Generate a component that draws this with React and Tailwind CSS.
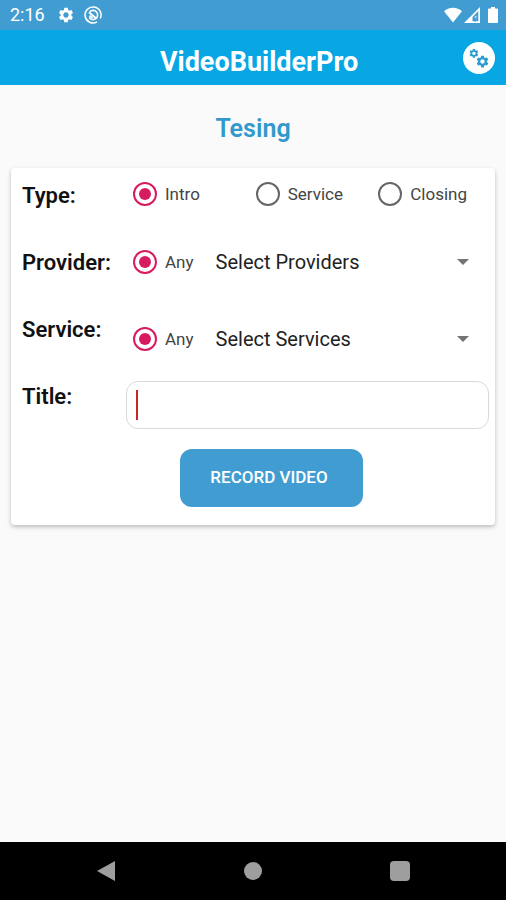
import React, { useState } from "react";

const videoTypes = ["Intro", "Service", "Closing"];

const GEAR_PATH =
  "M19.14 12.94c.04-.3.06-.61.06-.94 0-.32-.02-.64-.07-.94l2.03-1.58c.18-.14.23-.41.12-.61l-1.92-3.32c-.12-.22-.37-.29-.59-.22l-2.39.96c-.5-.38-1.03-.7-1.62-.94l-.36-2.54c-.04-.24-.24-.41-.48-.41h-3.84c-.24 0-.43.17-.47.41l-.36 2.54c-.59.24-1.13.57-1.62.94l-2.39-.96c-.22-.08-.47 0-.59.22L2.74 8.87c-.12.21-.08.47.12.61l2.03 1.58c-.05.3-.09.63-.09.94s.02.64.07.94l-2.03 1.58c-.18.14-.23.41-.12.61l1.92 3.32c.12.22.37.29.59.22l2.39-.96c.5.38 1.03.7 1.62.94l.36 2.54c.05.24.24.41.48.41h3.84c.24 0 .44-.17.47-.41l.36-2.54c.59-.24 1.13-.56 1.62-.94l2.39.96c.22.08.47 0 .59-.22l1.92-3.32c.12-.22.07-.47-.12-.61l-2.01-1.58zM12 15.6c-1.98 0-3.6-1.62-3.6-3.6s1.62-3.6 3.6-3.6 3.6 1.62 3.6 3.6-1.62 3.6-3.6 3.6z";

function StatusBar() {
  return (
    <div className="flex h-[30px] items-center bg-[#419dd1] pl-[10px] pr-2 text-white">
      <span className="text-lg leading-[30px]">2:16</span>
      <svg viewBox="0 0 24 24" className="ml-3 size-[18px]" fill="currentColor">
        <path d={GEAR_PATH} />
      </svg>
      <svg
        viewBox="0 0 18 18"
        className="ml-[9px] size-[18px]"
        fill="none"
        stroke="currentColor"
      >
        <path d="M13 15.900A8 8 0 1 1 16.200 12.500" strokeWidth="1.500" />
        <path d="M5.800 5.700A4.600 4.600 0 1 1 5.200 11.600" strokeWidth="1.600" />
        <path d="M5 6.200 12.300 12.500M5.500 9.800 8.500 12" strokeWidth="1.800" />
      </svg>
      <svg viewBox="0 0 18 16" className="ml-auto h-4 w-[18px]" fill="currentColor">
        <path d="M9 15.500 0 4.200C2.400 2 5.500.8 9 .8s6.600 1.200 9 3.400z" />
      </svg>
      <svg viewBox="0 0 16 16" className="ml-[2px] size-4" fill="currentColor">
        <path
          fillRule="evenodd"
          d="M16 0v16H0zM14.300 4.100 8.500 9.900v4.400h1.800V10.500L12.300 8.500v5.800h2z"
        />
        <path d="M10 10.500h2.500v4H10z" fill="#419dd1" />
      </svg>
      <svg viewBox="0 0 10 16" className="ml-2 h-4 w-[10px]" fill="currentColor">
        <path d="M3 0h4v1.600h2a1 1 0 0 1 1 1V15a1 1 0 0 1-1 1H1a1 1 0 0 1-1-1V2.600a1 1 0 0 1 1-1h2z" />
      </svg>
    </div>
  );
}

function Header() {
  return (
    <header className="flex h-[55px] items-center bg-[#08a7e4] px-[11px] text-white">
      <h1 className="flex-1 pl-11 pt-2 text-center text-[27px] font-bold leading-8">
        VideoBuilderPro
      </h1>
      <button
        type="button"
        aria-label="Settings"
        className="flex size-8 items-center justify-center rounded-full bg-white text-[#2b9bd0]"
      >
        <svg viewBox="0 0 32 32" className="size-8" fill="currentColor">
          <g transform="translate(5.400 5.800) scale(.46)">
            <path d={GEAR_PATH} />
          </g>
          <g transform="translate(12.200 12.200) scale(.61)">
            <path d={GEAR_PATH} />
          </g>
        </svg>
      </button>
    </header>
  );
}

function Radio({ label, ...props }) {
  return (
    <label className="flex items-center gap-2 text-[17px] leading-6 text-[#444444]">
      <input
        type="radio"
        className="flex size-6 shrink-0 appearance-none items-center justify-center rounded-full border-2 border-[#666666] before:size-3 before:rounded-full checked:border-[#d81b60] checked:before:bg-[#d81b60]"
        {...props}
      />
      {label}
    </label>
  );
}

function Dropdown({ id, label, placeholder }) {
  return (
    <div className="relative ml-[22px] flex-1">
      <select
        id={id}
        aria-label={label}
        className="w-full appearance-none bg-transparent pr-8 text-xl leading-[30px] text-[#222222] outline-none"
      >
        <option>{placeholder}</option>
      </select>
      <svg
        viewBox="0 0 12 6"
        className="pointer-events-none absolute right-0 top-3 h-[6px] w-3"
        fill="#737373"
      >
        <path d="M0 0h12L6 6z" />
      </svg>
    </div>
  );
}

function App() {
  const [type, setType] = useState("Intro");
  const [title, setTitle] = useState("");

  const rowLabel = "w-[104px] shrink-0 text-[22px] font-semibold leading-8 text-[#111111]";

  return (
    <div className="flex min-h-screen flex-col bg-[#fafafa] font-['Roboto',sans-serif]">
      <StatusBar />
      <Header />

      <main className="flex-1 px-[11px] pt-7">
        <h2 className="text-center text-[25px] font-semibold leading-8 text-[#3399cc]">
          Tesing
        </h2>

        <form
          className="mt-[23px] rounded-sm bg-white pb-[18px] pl-[11px] pr-[6px] pt-3 shadow-[0px_2px_4px_rgba(0,0,0,0.25)]"
          onSubmit={(e) => e.preventDefault()}
        >
          <div className="flex h-[67px] items-start">
            <span className={rowLabel}>Type:</span>
            <div className="flex h-7 flex-1 items-center pl-[7px] pr-[22px]">
              {videoTypes.map((item) => (
                <div key={item} className="flex-1 last:flex-none">
                  <Radio
                    label={item}
                    name="type"
                    value={item}
                    checked={type === item}
                    onChange={(e) => setType(e.target.value)}
                  />
                </div>
              ))}
            </div>
          </div>

          <div className="flex h-[67px] items-start">
            <label htmlFor="provider" className={rowLabel}>
              Provider:
            </label>
            <div className="flex h-[30px] flex-1 items-center pl-[7px] pr-[20px]">
              <Radio label="Any" name="anyProvider" defaultChecked />
              <Dropdown id="provider" label="Provider" placeholder="Select Providers" />
            </div>
          </div>

          <div className="flex h-[67px] items-start">
            <label htmlFor="service" className={rowLabel}>
              Service:
            </label>
            <div className="mt-[10px] flex h-[30px] flex-1 items-center pl-[7px] pr-[20px]">
              <Radio label="Any" name="anyService" defaultChecked />
              <Dropdown id="service" label="Service" placeholder="Select Services" />
            </div>
          </div>

          <div className="flex items-start">
            <label htmlFor="title" className={rowLabel}>
              Title:
            </label>
            <div className="flex h-12 flex-1 items-center rounded-xl border border-[#d9d9d9] px-[9px]">
              <span className="h-[30px] w-[2px] bg-[#c62828]"></span>
              <input
                id="title"
                type="text"
                value={title}
                onChange={(e) => setTitle(e.target.value)}
                className="min-w-0 flex-1 text-xl caret-transparent outline-none"
              />
            </div>
          </div>

          <div className="mt-5 flex justify-center pl-8">
            <button
              type="submit"
              className="h-[58px] rounded-xl bg-[#419dd1] pl-[30px] pr-[35px] text-[17px] font-medium text-white"
            >
              RECORD VIDEO
            </button>
          </div>
        </form>
      </main>

      <nav className="grid h-[58px] grid-cols-3 items-center justify-items-center bg-black px-8 text-[#9e9e9e]">
        <button type="button" aria-label="Back">
          <svg viewBox="0 0 18 20" className="h-5 w-[18px]" fill="currentColor">
            <path d="M18 0v20L0 10z" />
          </svg>
        </button>
        <button type="button" aria-label="Home" className="size-[18px] rounded-full bg-[#9e9e9e]"></button>
        <button type="button" aria-label="Recents" className="size-5 rounded-sm bg-[#9e9e9e]"></button>
      </nav>
    </div>
  );
}

export default App;
